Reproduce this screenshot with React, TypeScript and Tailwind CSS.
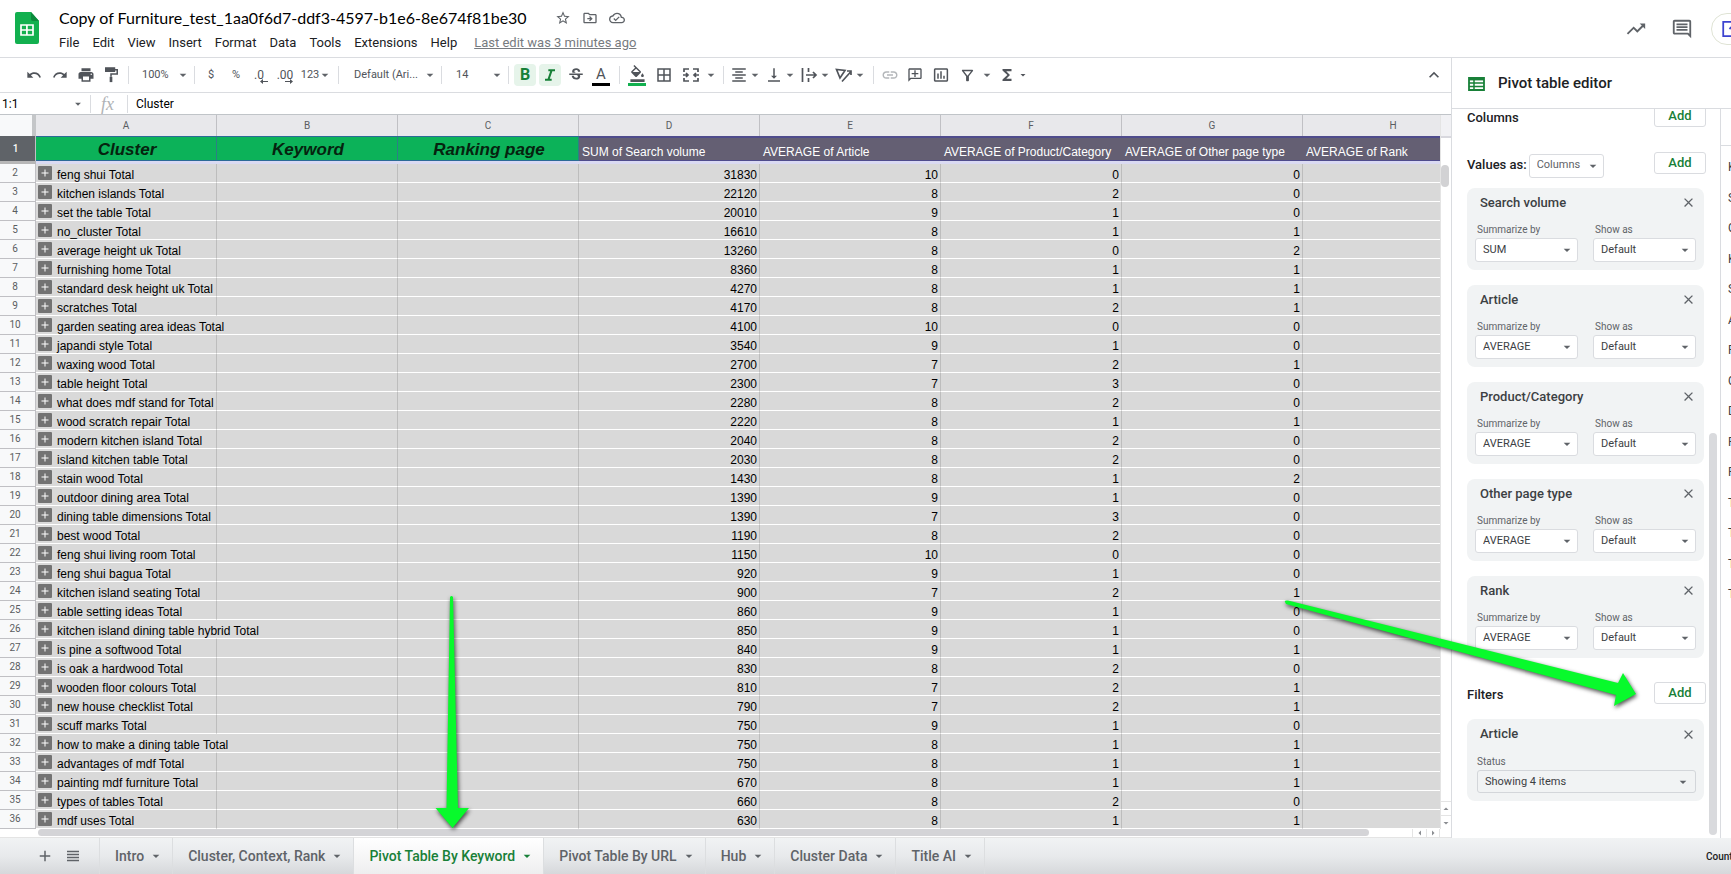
import type { ReactNode } from "react";
import {
  MdAdd,
  MdArrowDropDown,
  MdBorderAll,
  MdClose,
  MdFormatAlignCenter,
  MdFormatColorFill,
  MdFunctions,
  MdInsertChartOutlined,
  MdKeyboardArrowUp,
  MdLink,
  MdOutlineAddComment,
  MdOutlineCloudDone,
  MdOutlineComment,
  MdOutlineDriveFileMove,
  MdOutlineFilterAlt,
  MdPrint,
  MdRedo,
  MdStarBorder,
  MdStrikethroughS,
  MdTrendingUp,
  MdUndo,
  MdVerticalAlignBottom,
} from "react-icons/md";

/* ---------- Sheet data ---------- */
const rows: [string, number, number, number, number][] = [
  ["feng shui", 31830, 10, 0, 0],
  ["kitchen islands", 22120, 8, 2, 0],
  ["set the table", 20010, 9, 1, 0],
  ["no_cluster", 16610, 8, 1, 1],
  ["average height uk", 13260, 8, 0, 2],
  ["furnishing home", 8360, 8, 1, 1],
  ["standard desk height uk", 4270, 8, 1, 1],
  ["scratches", 4170, 8, 2, 1],
  ["garden seating area ideas", 4100, 10, 0, 0],
  ["japandi style", 3540, 9, 1, 0],
  ["waxing wood", 2700, 7, 2, 1],
  ["table height", 2300, 7, 3, 0],
  ["what does mdf stand for", 2280, 8, 2, 0],
  ["wood scratch repair", 2220, 8, 1, 1],
  ["modern kitchen island", 2040, 8, 2, 0],
  ["island kitchen table", 2030, 8, 2, 0],
  ["stain wood", 1430, 8, 1, 2],
  ["outdoor dining area", 1390, 9, 1, 0],
  ["dining table dimensions", 1390, 7, 3, 0],
  ["best wood", 1190, 8, 2, 0],
  ["feng shui living room", 1150, 10, 0, 0],
  ["feng shui bagua", 920, 9, 1, 0],
  ["kitchen island seating", 900, 7, 2, 1],
  ["table setting ideas", 860, 9, 1, 0],
  ["kitchen island dining table hybrid", 850, 9, 1, 0],
  ["is pine a softwood", 840, 9, 1, 1],
  ["is oak a hardwood", 830, 8, 2, 0],
  ["wooden floor colours", 810, 7, 2, 1],
  ["new house checklist", 790, 7, 2, 1],
  ["scuff marks", 750, 9, 1, 0],
  ["how to make a dining table", 750, 8, 1, 1],
  ["advantages of mdf", 750, 8, 1, 1],
  ["painting mdf furniture", 670, 8, 1, 1],
  ["types of tables", 660, 8, 2, 0],
  ["mdf uses", 630, 8, 1, 1],
];

const columns = ["A", "B", "C", "D", "E", "F", "G", "H"];
const groupHeads = ["Cluster", "Keyword", "Ranking page"];
const valueHeads = [
  "SUM of Search volume",
  "AVERAGE of Article",
  "AVERAGE of Product/Category",
  "AVERAGE of Other page type",
  "AVERAGE of Rank",
];
const menus = ["File", "Edit", "View", "Insert", "Format", "Data", "Tools", "Extensions", "Help"];
const values = [
  { name: "Search volume", by: "SUM" },
  { name: "Article", by: "AVERAGE" },
  { name: "Product/Category", by: "AVERAGE" },
  { name: "Other page type", by: "AVERAGE" },
  { name: "Rank", by: "AVERAGE" },
];
const tabs = ["Intro", "Cluster, Context, Rank", "Pivot Table By Keyword", "Pivot Table By URL", "Hub", "Cluster Data", "Title AI"];
const fieldInitials = ["K", "S", "C", "K", "S", "A", "P", "C", "D", "P", "P", "T", "T", "T", "T"];

/* ---------- Small pieces ---------- */
function Caret({ className = "" }: { className?: string }) {
  return <MdArrowDropDown className={`h-4 w-4 shrink-0 text-[#5f6368] ${className}`} />;
}

function Sep() {
  return (
    <div className="flex w-[10px] shrink-0 justify-center">
      <div className="h-[18px] w-px bg-[#dadce0]" />
    </div>
  );
}

function Tool({ label, width, children }: { label: string; width: string; children: ReactNode }) {
  return (
    <button aria-label={label} className={`flex h-6 shrink-0 items-center justify-center ${width}`}>
      {children}
    </button>
  );
}

function ToolSelect({ label, value, width, pad }: { label: string; value: string; width: string; pad: string }) {
  return (
    <div className={`relative shrink-0 ${width}`}>
      <select aria-label={label} className={`h-6 w-full appearance-none bg-transparent text-[11px] ${pad}`}>
        <option>{value}</option>
      </select>
      <Caret className="pointer-events-none absolute -right-0.5 top-1" />
    </div>
  );
}

function DropTool({ label, children }: { label: string; children: ReactNode }) {
  return (
    <button aria-label={label} className="flex h-6 w-[35px] shrink-0 items-center pl-[2px]">
      {children}
      <Caret className="-ml-px" />
    </button>
  );
}

function Stroke({ d, size = "h-[18px] w-[18px]" }: { d: string; size?: string }) {
  return (
    <svg viewBox="0 0 18 18" className={`shrink-0 ${size}`} fill="none" stroke="currentColor" strokeWidth="1.7">
      <path d={d} />
    </svg>
  );
}

/* ---------- Header ---------- */
function Header() {
  return (
    <header className="flex h-[58px] shrink-0 overflow-hidden border-b border-[#dadce0]">
      <svg viewBox="0 0 24 32" className="ml-[15px] mt-3 h-8 w-6 shrink-0">
        <path d="M2 0h14l8 9v21a2 2 0 0 1-2 2H2a2 2 0 0 1-2-2V2a2 2 0 0 1 2-2z" fill="#12b04f" />
        <path d="M16 0l8 9h-6a2 2 0 0 1-2-2z" fill="#0b8a3c" />
        <path d="M6 13h12v10H6z M11.900 13v10 M6 18h12" fill="none" stroke="#fff" strokeWidth="1.7" />
      </svg>
      <div className="ml-5 min-w-0 flex-1">
        <div className="mt-[6px] flex h-6 items-center">
          <h1 className="whitespace-nowrap font-[Lato,sans-serif] text-base leading-6 text-black">
            Copy of Furniture_test_1aa0f6d7-ddf3-4597-b1e6-8e674f81be30
          </h1>
          <div className="ml-7 flex items-center gap-[11px] text-[#5f6368]">
            <button aria-label="Star"><MdStarBorder className="h-4 w-4" /></button>
            <button aria-label="Move"><MdOutlineDriveFileMove className="h-4 w-4" /></button>
            <button aria-label="Document status"><MdOutlineCloudDone className="h-4 w-4" /></button>
          </div>
        </div>
        <nav className="mt-[3px] flex h-5 items-center text-[13px] leading-5 text-[#202124]">
          {menus.map((m) => (
            <button key={m} className="mr-[13px]">{m}</button>
          ))}
          <a href="#history" className="ml-1 whitespace-nowrap text-[#777b80] underline">
            Last edit was 3 minutes ago
          </a>
        </nav>
      </div>
      <div className="flex items-center text-[#5f6368]">
        <button aria-label="Activity"><MdTrendingUp className="h-[22px] w-[22px]" /></button>
        <button aria-label="Comments" className="ml-6"><MdOutlineComment className="h-[22px] w-[22px]" /></button>
        <div className="ml-[18px] h-8 w-5 overflow-hidden">
          <button aria-label="Present" className="flex h-8 w-16 items-center rounded-full border border-[#dfe3d4] pl-[10px]">
            <svg viewBox="0 0 24 18" className="h-4 w-[22px] text-[#3c43d0]" fill="none" stroke="currentColor" strokeWidth="2">
              <path d="M1 1h22v16H1z M12 13V5 M8 9l4-4 4 4" />
            </svg>
          </button>
        </div>
      </div>
    </header>
  );
}

/* ---------- Toolbar ---------- */
function Toolbar() {
  return (
    <div className="flex h-[35px] shrink-0 items-center border-b border-[#dadce0] pl-[21px] text-[11px] text-[#50545a]">
      <Tool label="Undo" width="w-[26px]"><MdUndo className="h-4 w-4" /></Tool>
      <Tool label="Redo" width="w-[26px]"><MdRedo className="h-4 w-4" /></Tool>
      <Tool label="Print" width="w-[26px]"><MdPrint className="h-[18px] w-[18px]" /></Tool>
      <Tool label="Paint format" width="w-6">
        <svg viewBox="0 0 18 18" className="h-4 w-4" fill="none" stroke="currentColor">
          <path d="M3 1h10v4H3z" fill="currentColor" strokeWidth="1.500" />
          <path d="M13 3h3v5H9v3" strokeWidth="1.700" />
          <path d="M9 11v6" strokeWidth="3" />
        </svg>
      </Tool>
      <Sep />
      <ToolSelect label="Zoom" value="100%" width="w-[56px]" pad="pl-[9px]" />
      <Sep />
      <Tool label="Format as currency" width="w-6">$</Tool>
      <Tool label="Format as percent" width="w-[26px]">%</Tool>
      <Tool label="Decrease decimal places" width="w-5">
        <span className="relative text-xs">
          .0
          <svg viewBox="0 0 8 5" className="absolute -right-1 top-3 h-[5px] w-2"><path d="M0 2.500L3 0v2h5v1H3v2z" fill="currentColor" /></svg>
        </span>
      </Tool>
      <Tool label="Increase decimal places" width="w-8">
        <span className="relative text-xs">
          .00
          <svg viewBox="0 0 8 5" className="absolute right-0 top-3 h-[5px] w-2"><path d="M8 2.500L5 0v2H0v1h5v2z" fill="currentColor" /></svg>
        </span>
      </Tool>
      <Tool label="More formats" width="w-8">123<Caret className="-ml-[2px]" /></Tool>
      <Sep />
      <ToolSelect label="Font" value="Default (Ari..." width="w-[93px]" pad="pl-[11px]" />
      <Sep />
      <ToolSelect label="Font size" value="14" width="w-[57px]" pad="pl-[10px]" />
      <Sep />
      <Tool label="Bold" width="w-6">
        <span className="flex h-[22px] w-[22px] items-center justify-center rounded-sm bg-[#e6f4ea] text-base font-bold text-[#188038]">B</span>
      </Tool>
      <Tool label="Italic" width="w-[26px]">
        <span className="flex h-[22px] w-[22px] items-center justify-center rounded-sm bg-[#e6f4ea] text-[#188038]">
          <svg viewBox="0 0 12 14" className="h-3 w-[10px]" fill="none" stroke="currentColor" strokeWidth="2.400">
            <path d="M4 1.200h8 M0 12.800h8 M8 1.200L4 12.800" />
          </svg>
        </span>
      </Tool>
      <Tool label="Strikethrough" width="w-[25px]"><MdStrikethroughS className="h-[18px] w-[18px]" /></Tool>
      <Tool label="Text colour" width="w-[26px]">
        <span className="flex w-[18px] flex-col items-center border-b-[3px] border-black text-[15px] leading-[18px]">A</span>
      </Tool>
      <Sep />
      <Tool label="Fill colour" width="w-[26px]">
        <span className="flex w-[18px] flex-col items-center border-b-[3px] border-[#12b04f] pb-px">
          <MdFormatColorFill className="h-[17px] w-[17px]" />
        </span>
      </Tool>
      <Tool label="Borders" width="w-7"><MdBorderAll className="h-[18px] w-[18px]" /></Tool>
      <Tool label="Merge cells" width="w-[26px]">
        <Stroke d="M2 6V3h5 M11 3h5v3 M2 12v3h5 M11 15h5v-3 M1 9h5 M4 7l2 2-2 2 M17 9h-5 M14 7l-2 2 2 2" />
      </Tool>
      <Tool label="Merge options" width="w-[14px]"><Caret /></Tool>
      <Sep />
      <DropTool label="Horizontal align"><MdFormatAlignCenter className="h-[18px] w-[18px] shrink-0" /></DropTool>
      <DropTool label="Vertical align"><MdVerticalAlignBottom className="h-[18px] w-[18px] shrink-0" /></DropTool>
      <DropTool label="Text wrapping"><Stroke d="M2.500 2v14 M8.500 2v4 M8.500 12v4 M6 9h10 M13 6l3 3-3 3" /></DropTool>
      <DropTool label="Text rotation"><Stroke d="M1.500 3.500L5 12l5-7.500z M7 15.500L16 5.500 M12 5h4v4" /></DropTool>
      <Sep />
      <Tool label="Insert link" width="w-6"><MdLink className="h-[18px] w-[18px] text-[#b4b7ba]" /></Tool>
      <Tool label="Insert comment" width="w-[26px]"><MdOutlineAddComment className="h-4 w-4 -scale-x-100" /></Tool>
      <Tool label="Insert chart" width="w-[26px]"><MdInsertChartOutlined className="h-[18px] w-[18px]" /></Tool>
      <Tool label="Create a filter" width="w-[26px]"><MdOutlineFilterAlt className="h-[17px] w-[17px]" /></Tool>
      <Tool label="Filter views" width="w-[14px]"><Caret /></Tool>
      <Tool label="Functions" width="w-[26px]"><MdFunctions className="h-[18px] w-[18px]" /></Tool>
      <Tool label="More functions" width="w-[6px]"><MdArrowDropDown className="h-3 w-3 shrink-0" /></Tool>
      <button aria-label="Hide the menus" className="ml-auto mr-[7px]"><MdKeyboardArrowUp className="h-5 w-5" /></button>
    </div>
  );
}

function FormulaBar() {
  return (
    <div className="flex h-[22px] shrink-0 items-center border-b border-[#c0c4c8] text-xs text-black">
      <input aria-label="Name box" defaultValue="1:1" className="w-[71px] pl-[2px] outline-none" />
      <Caret className="h-[14px] w-[14px]" />
      <Sep />
      <span className="w-8 pl-[6px] font-[Liberation_Serif] text-lg italic leading-5 text-[#b0b3b6]">fx</span>
      <div className="h-[18px] w-px bg-[#dadce0]" />
      <input aria-label="Formula" defaultValue="Cluster" className="min-w-0 flex-1 pl-2 outline-none" />
    </div>
  );
}

/* ---------- Grid ---------- */
function Grid() {
  return (
    <div className="min-h-0 min-w-0 flex-1 overflow-hidden">
      <table className="w-[1484px] table-fixed border-separate border-spacing-0 font-[Liberation_Sans,sans-serif] text-xs leading-[14px] text-black">
        <thead>
          <tr className="h-[21px]">
            <th className="w-9 border-r-4 border-[#c4c6c8] bg-[#f8f9fa] p-0" />
            {columns.map((c) => (
              <th key={c} className="border-r border-[#c0c0c4] bg-[#e8e8eb] p-0 font-[Roboto] text-[10px] font-normal text-[#5a5d61]">
                {c}
              </th>
            ))}
          </tr>
          <tr className="h-[25px]">
            <th className="border-r border-[#c0c0c4] bg-[#5f6368] p-0 pr-1 font-[Roboto] text-[10px] font-medium text-white">1</th>
            {groupHeads.map((h) => (
              <th
                key={h}
                className="border-y border-r border-y-[#2b6a96] border-r-[#2c7f86] bg-[#0cb259] p-0 pl-[2px] pt-[2px] text-[17px] font-bold italic leading-5 text-[#06230f]"
              >
                {h}
              </th>
            ))}
            {valueHeads.map((h) => (
              <th
                key={h}
                className="whitespace-nowrap border-y border-t-2 border-[#4f4c8c] bg-[#645f73] p-0 pb-px pl-[3px] text-left align-bottom font-normal text-white"
              >
                {h}
              </th>
            ))}
          </tr>
          <tr className="h-[3px]">
            <td className="bg-[#b7b7b7] p-0" />
            <td colSpan={8} className="bg-[#dadaf2] p-0" />
          </tr>
        </thead>
        <tbody>
          {rows.map(([name, volume, ...avgs], i) => (
            <tr key={name} className="h-[19px] bg-[#d9d9d9]">
              <th className="border-b border-r border-[#c0c0c4] bg-[#f8f9fa] p-0 pr-[5px] font-[Roboto] text-[10px] font-normal text-[#5a5d61]">
                {i + 2}
              </th>
              <td className={`border-b border-r border-b-white p-0 ${name.length > 24 ? "border-r-transparent" : "border-r-[#bdbdbd]"}`}>
                <div className="flex h-[18px] items-center pl-[2px]">
                  <button aria-label={`Expand ${name}`} className="flex h-[14px] w-[14px] shrink-0 items-center justify-center rounded-[1px] bg-[#737373] text-white">
                    <MdAdd className="h-3 w-3" />
                  </button>
                  <span className="ml-[5px] whitespace-nowrap pt-1">{name} Total</span>
                </div>
              </td>
              <td className="border-b border-r border-b-white border-r-[#bdbdbd] p-0" />
              <td className="border-b border-r border-b-white border-r-[#bdbdbd] p-0" />
              {[volume, ...avgs].map((n, j) => (
                <td key={j} className="border-b border-r border-b-white border-r-[#bdbdbd] p-0 pr-[2px] pt-1 text-right">
                  {n}
                </td>
              ))}
              <td className="border-b border-b-white p-0" />
            </tr>
          ))}
        </tbody>
      </table>
    </div>
  );
}

function ScrollArrow({ turn, label }: { turn: string; label: string }) {
  return (
    <button aria-label={label} className="flex h-[14px] w-full items-center justify-center border-t border-[#e4e4e4] text-[#8a8d91]">
      <MdArrowDropDown className={`h-3 w-3 shrink-0 ${turn}`} />
    </button>
  );
}

function Sheet() {
  return (
    <div className="flex min-h-0 min-w-0 flex-1 flex-col">
      <div className="flex min-h-0 flex-1">
        <Grid />
        <div className="flex w-[11px] shrink-0 flex-col border-l border-[#e4e4e4]">
          <div className="h-[21px] bg-[#f1f1f4]" />
          <div className="h-[29px] border-t-2 border-[#d8d8de]" />
          <div className="h-[22px] w-2 rounded-full bg-[#d2d2d4]" />
          <div className="mt-auto flex flex-col">
            <ScrollArrow label="Scroll up" turn="rotate-180" />
            <ScrollArrow label="Scroll down" turn="" />
          </div>
        </div>
      </div>
      <div className="flex h-[9px] shrink-0 border-b border-[#e4e4e4] pl-9">
        <div className="mr-[43px] flex-1 pl-[2px]">
          <div className="h-[7px] rounded-full bg-[#d4d4d7]" />
        </div>
        <div className="flex h-2 w-7 overflow-hidden">
          <div className="flex w-[14px] items-center justify-center border-l border-[#e4e4e4] text-[#8a8d91]"><MdArrowDropDown className="h-3 w-3 shrink-0 rotate-90" /></div>
          <div className="flex w-[14px] items-center justify-center border-x border-[#e4e4e4] text-[#8a8d91]"><MdArrowDropDown className="h-3 w-3 shrink-0 -rotate-90" /></div>
        </div>
        <div className="w-[11px]" />
      </div>
    </div>
  );
}

/* ---------- Pivot table editor ---------- */
function PanelSelect({ label, value }: { label: string; value: string }) {
  return (
    <label className="block w-[103px] text-[10px] leading-4 text-[#5f6368]">
      <span className="block pl-[2px]">{label}</span>
      <span className="relative block">
        <select className="h-6 w-full appearance-none rounded-[3px] border border-[#dadce0] bg-white pl-[7px] text-[11px] text-[#3c4043]">
          <option>{value}</option>
        </select>
        <Caret className="pointer-events-none absolute right-[3px] top-1" />
      </span>
    </label>
  );
}

function AddButton() {
  return (
    <button className="h-[22px] w-[52px] rounded-[3px] border border-[#dadce0] bg-white text-[13px] font-medium leading-5 text-[#188038]">
      Add
    </button>
  );
}

function Card({ title, children }: { title: string; children: ReactNode }) {
  return (
    <section className="h-[82px] shrink-0 rounded-lg bg-[#f1f3f4] px-2 pt-[5px]">
      <div className="flex h-5 items-center justify-between pl-[5px]">
        <h3 className="text-[13px] font-medium leading-5 text-[#3c4043]">{title}</h3>
        <button aria-label={`Remove ${title}`} className="text-[#5f6368]"><MdClose className="h-[15px] w-[15px]" /></button>
      </div>
      {children}
    </section>
  );
}

function Panel() {
  return (
    <aside className="flex w-[280px] shrink-0 flex-col border-l border-[#dadce0]">
      <div className="flex h-[51px] shrink-0 items-center border-b border-[#dadce0] pl-4">
        <svg viewBox="0 0 17 14" className="mt-[2px] h-[14px] w-[17px] text-[#188038]" fill="none" stroke="currentColor">
          <path d="M1 1h15v12H1z" strokeWidth="1.800" />
          <path d="M1 2.200h15" strokeWidth="2.400" />
          <path d="M6 2v11 M1 6h15 M1 9.500h15" strokeWidth="1.500" />
        </svg>
        <h2 className="ml-[13px] text-[15px] font-medium leading-5 text-[#202124]">Pivot table editor</h2>
      </div>
      <div className="flex min-h-0 flex-1">
        <div className="flex min-w-0 flex-1 flex-col overflow-hidden pl-[15px]">
          <div className="-mt-[5px] flex shrink-0 items-center justify-between pr-[2px]">
            <h3 className="pt-1 text-[13px] font-medium text-[#202124]">Columns</h3>
            <AddButton />
          </div>
          <div className="mt-6 flex shrink-0 items-start justify-between pr-[2px]">
            <label className="flex items-center text-[13px] font-medium text-[#202124]">
              Values as:
              <span className="relative ml-[2px] block pt-[2px] font-normal">
                <select className="h-6 w-[75px] appearance-none rounded-[3px] border border-[#dadce0] bg-white pl-[7px] text-[11px] text-[#5f6368]">
                  <option>Columns</option>
                </select>
                <Caret className="pointer-events-none absolute right-[3px] top-[6px]" />
              </span>
            </label>
            <AddButton />
          </div>
          <div className="mt-[10px] flex flex-col gap-[15px] pr-1">
            {values.map((v) => (
              <Card key={v.name} title={v.name}>
                <div className="mt-[9px] flex gap-[15px]">
                  <PanelSelect label="Summarize by" value={v.by} />
                  <PanelSelect label="Show as" value="Default" />
                </div>
              </Card>
            ))}
          </div>
          <div className="mt-6 flex shrink-0 items-center justify-between pr-[2px]">
            <h3 className="pt-[3px] text-[13px] font-medium text-[#202124]">Filters</h3>
            <AddButton />
          </div>
          <div className="mt-[15px] pr-1">
            <Card title="Article">
              <label className="mt-[10px] block text-[10px] leading-4 text-[#5f6368]">
                <span className="block pl-[2px]">Status</span>
                <span className="relative ml-[2px] block">
                  <select className="h-[23px] w-full appearance-none rounded-[3px] border border-[#d3d6da] bg-[#f1f3f4] pl-[7px] text-[11px] text-[#3c4043]">
                    <option>Showing 4 items</option>
                  </select>
                  <Caret className="pointer-events-none absolute right-[5px] top-1" />
                </span>
              </label>
            </Card>
          </div>
        </div>
        <div className="flex w-3 shrink-0 flex-col pb-[3px] pl-[1px]">
          <div className="flex-[324]" />
          <div className="w-2 flex-[403] rounded-full bg-[#d9dadd]" />
        </div>
        <div className="w-[11px] shrink-0 overflow-hidden border-l border-[#dadce0]">
          <div className="h-[37px] border-b border-[#dadce0]" />
          <ul className="pl-[7px] pt-[6px] text-xs text-[#3c4043]">
            {fieldInitials.map((f, i) => (
              <li key={i} className={`${i % 2 ? "h-[30px]" : "h-[31px]"} leading-[30px]`}>{f}</li>
            ))}
          </ul>
        </div>
      </div>
    </aside>
  );
}

/* ---------- Sheet tabs ---------- */
function TabBar() {
  return (
    <footer className="flex h-9 shrink-0 items-stretch overflow-hidden bg-linear-to-b from-[#f1f3f4] via-[#e8eaec] to-[#d6d8db] pl-8 text-[#5f6368]">
      <button aria-label="Add sheet" className="w-7 pl-1"><MdAdd className="h-[18px] w-[18px]" /></button>
      <button aria-label="All sheets" className="w-[39px] pl-[7px]">
        <svg viewBox="0 0 12 12" className="h-3 w-3" stroke="currentColor" strokeWidth="1.700">
          <path d="M0 1.500h12 M0 4.500h12 M0 7.500h12 M0 10.500h12" />
        </svg>
      </button>
      {tabs.map((t, i) => (
        <button
          key={t}
          className={`flex shrink-0 items-center gap-1 whitespace-nowrap border-l border-[#dcdee0] pl-[15px] pr-2 text-[14px] font-medium ${
            i === 2 ? "bg-white bg-linear-to-b from-white to-[#eeeeef] text-[#188038]" : ""
          }`}
        >
          {t}
          <Caret className={i === 2 ? "text-[#188038]" : ""} />
        </button>
      ))}
      <div className="border-l border-[#dcdee0]" />
      <div className="ml-auto w-[25px] self-center text-[10px] font-medium text-[#202124]">Count</div>
    </footer>
  );
}

/* ---------- Callout arrows drawn over the sheet ---------- */
function Callouts() {
  return (
    <>
      <svg viewBox="0 0 50 240" className="pointer-events-none absolute left-[430px] top-[594px] h-[240px] w-[50px] drop-shadow-[1px_2px_2px_rgba(0,0,0,0.7)]">
        <path d="M20 3Q21.500 1 23 3L28 214H39L22.500 234L5.500 214H16.500z" fill="#08fa2c" />
      </svg>
      <svg viewBox="0 0 364 116" className="pointer-events-none absolute left-[1280px] top-[598px] h-[116px] w-[364px] drop-shadow-[1px_2px_2px_rgba(0,0,0,0.7)]">
        <path d="M5 4Q4 2 8 2.500L338 85L343 75L356 96L334 108L336 97L6 6z" fill="#08fa2c" />
      </svg>
    </>
  );
}

export default function App() {
  return (
    <div className="relative flex h-screen flex-col overflow-hidden bg-white font-[Roboto,sans-serif]">
      <Header />
      <div className="flex min-h-0 flex-1">
        <div className="flex min-w-0 flex-1 flex-col">
          <Toolbar />
          <FormulaBar />
          <Sheet />
        </div>
        <Panel />
      </div>
      <TabBar />
      <Callouts />
    </div>
  );
}
